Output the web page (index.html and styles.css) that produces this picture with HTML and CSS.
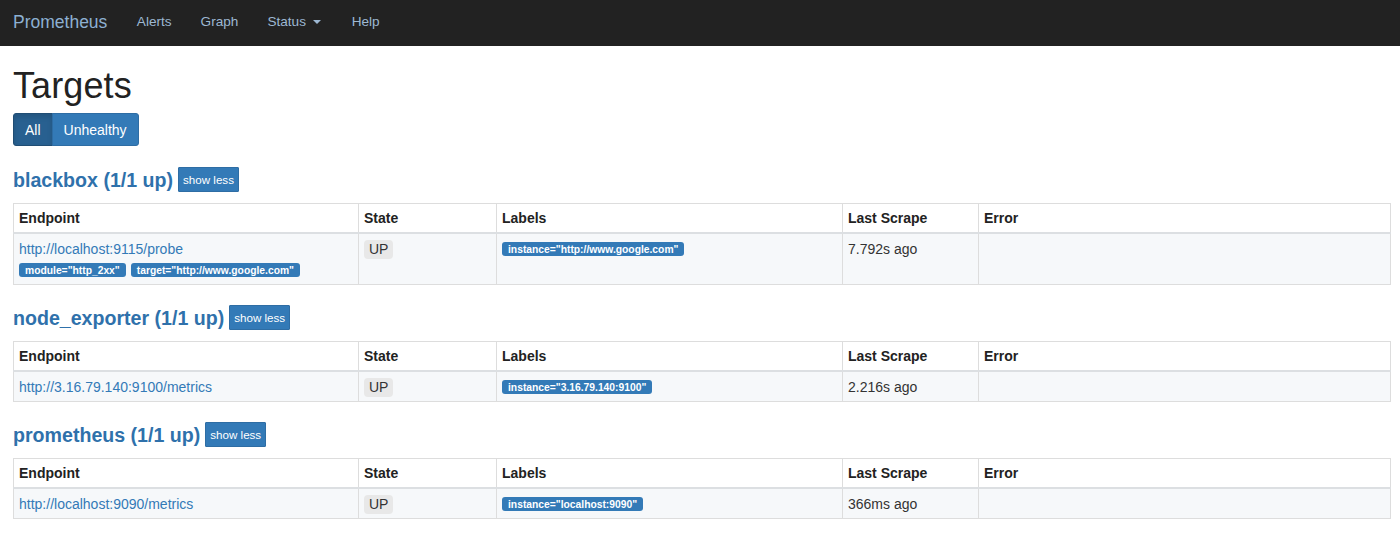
FILE: index.html
```html
<!DOCTYPE html>
<html>
<head>
<meta charset="utf-8">
<title>Prometheus Time Series Collection and Processing Server</title>
<link rel="stylesheet" href="styles.css">
</head>
<body>
<nav class="navbar">
  <a class="brand" href="#">Prometheus</a>
  <ul class="nav">
    <li><a href="#">Alerts</a></li>
    <li><a href="#">Graph</a></li>
    <li><a href="#">Status <span class="caret"></span></a></li>
    <li><a href="#">Help</a></li>
  </ul>
</nav>
<main class="container">
  <h1 class="title">Targets</h1>
  <div class="btn-group">
    <button class="btn active">All</button>
    <button class="btn">Unhealthy</button>
  </div>

  <section class="job">
    <div class="job-header">
      <h2><a href="#">blackbox (1/1 up)</a></h2>
      <button class="btn-xs">show less</button>
    </div>
    <table class="targets">
      <colgroup><col class="c1"><col class="c2"><col class="c3"><col class="c4"><col class="c5"></colgroup>
      <thead><tr><th>Endpoint</th><th>State</th><th>Labels</th><th>Last Scrape</th><th>Error</th></tr></thead>
      <tbody><tr>
        <td><a href="#">http://localhost:9115/probe</a>
          <div class="params"><span class="label">module="http_2xx"</span><span class="label">target="http://www.google.com"</span></div>
        </td>
        <td><span class="state">UP</span></td>
        <td><span class="label">instance="http://www.google.com"</span></td>
        <td>7.792s ago</td>
        <td></td>
      </tr></tbody>
    </table>
  </section>

  <section class="job">
    <div class="job-header">
      <h2><a href="#">node_exporter (1/1 up)</a></h2>
      <button class="btn-xs">show less</button>
    </div>
    <table class="targets">
      <colgroup><col class="c1"><col class="c2"><col class="c3"><col class="c4"><col class="c5"></colgroup>
      <thead><tr><th>Endpoint</th><th>State</th><th>Labels</th><th>Last Scrape</th><th>Error</th></tr></thead>
      <tbody><tr>
        <td><a href="#">http://3.16.79.140:9100/metrics</a></td>
        <td><span class="state">UP</span></td>
        <td><span class="label">instance="3.16.79.140:9100"</span></td>
        <td>2.216s ago</td>
        <td></td>
      </tr></tbody>
    </table>
  </section>

  <section class="job">
    <div class="job-header">
      <h2><a href="#">prometheus (1/1 up)</a></h2>
      <button class="btn-xs">show less</button>
    </div>
    <table class="targets">
      <colgroup><col class="c1"><col class="c2"><col class="c3"><col class="c4"><col class="c5"></colgroup>
      <thead><tr><th>Endpoint</th><th>State</th><th>Labels</th><th>Last Scrape</th><th>Error</th></tr></thead>
      <tbody><tr>
        <td><a href="#">http://localhost:9090/metrics</a></td>
        <td><span class="state">UP</span></td>
        <td><span class="label">instance="localhost:9090"</span></td>
        <td>366ms ago</td>
        <td></td>
      </tr></tbody>
    </table>
  </section>
</main>
</body>
</html>
```

FILE: styles.css
```css
* { box-sizing: border-box; }
html, body { margin: 0; padding: 0; }
body {
  font-family: "Liberation Sans", Arial, sans-serif;
  font-size: 14px;
  line-height: 20px;
  color: #333;
  background: #fff;
}
a { color: #337ab7; text-decoration: none; }

.navbar {
  height: 46px;
  background: #222;
  display: flex;
  align-items: center;
  padding: 0 0 3px 13px;
}
.brand {
  font-size: 17.5px;
  color: #8db0d2;
  padding-right: 15px;
}
.nav {
  list-style: none;
  margin: 0;
  padding: 0;
  display: flex;
}
.nav a {
  display: block;
  padding: 0 14.5px;
  color: #9db8d2;
  font-size: 13.6px;
}
.caret {
  display: inline-block;
  width: 0;
  height: 0;
  margin-left: 3px;
  margin-right: 2px;
  vertical-align: middle;
  border-top: 4px solid #9db8d2;
  border-left: 4px solid transparent;
  border-right: 4px solid transparent;
}

.container { padding: 0 9px 0 13px; }

.title {
  font-size: 36px;
  font-weight: 500;
  line-height: 40px;
  color: #222;
  margin: 20px 0 0;
  letter-spacing: 0.1px;
}

.btn-group { display: flex; margin-top: 7px; }
.btn {
  height: 33px;
  padding: 0 11px;
  font-family: inherit;
  font-size: 14px;
  color: #fff;
  background: #337ab7;
  border: 1px solid #2e6da4;
  cursor: pointer;
}
.btn:first-child { border-radius: 3px 0 0 3px; }
.btn:last-child { border-radius: 0 3px 3px 0; margin-left: -1px; }
.btn.active { background: #286090; border-color: #204d74; box-shadow: inset 0 3px 5px rgba(0,0,0,.125); }

.job-header {
  display: flex;
  align-items: center;
  gap: 5px;
  margin: 21px 0 11px;
}
.job-header h2 {
  margin: 0;
  font-size: 19.6px;
  font-weight: bold;
  line-height: 24px;
}
.job-header h2 a { color: #2f71ab; }
.btn-xs {
  height: 25px;
  padding: 0 4px;
  font-family: inherit;
  font-size: 11.6px;
  color: #fff;
  background: #337ab7;
  border: 1px solid #2e6da4;
  border-radius: 1px;
}
.job + .job .job-header { margin-top: 20px; }

.targets {
  width: 100%;
  border-collapse: collapse;
  table-layout: fixed;
  border: 1px solid #ddd;
}
.c1 { width: 345px; }
.c2 { width: 138px; }
.c3 { width: 346px; }
.c4 { width: 136px; }
.targets th {
  text-align: left;
  font-weight: bold;
  color: #222;
  padding: 4px 5px 4px;
  border: 1px solid #ddd;
  border-bottom: 2px solid #dcdfe2;
  background: #fff;
}
.targets td {
  padding: 5px 5px 4px;
  vertical-align: top;
  border: 1px solid #ddd;
  background: #f6f8fa;
}
.params {
  display: flex;
  gap: 5px;
  margin: 4px 0 3px;
}
.label {
  display: inline-block;
  font-size: 10.3px;
  font-weight: bold;
  line-height: 11px;
  color: #fff;
  background: #337ab7;
  padding: 2px 6px 1px;
  border-radius: 3px;
  white-space: nowrap;
  vertical-align: 1px;
}
.state {
  display: inline-block;
  background: #e8e8e8;
  color: #333;
  padding: 0 5px;
  line-height: 19px;
  border-radius: 4px;
  margin-top: 1px;
}
```
